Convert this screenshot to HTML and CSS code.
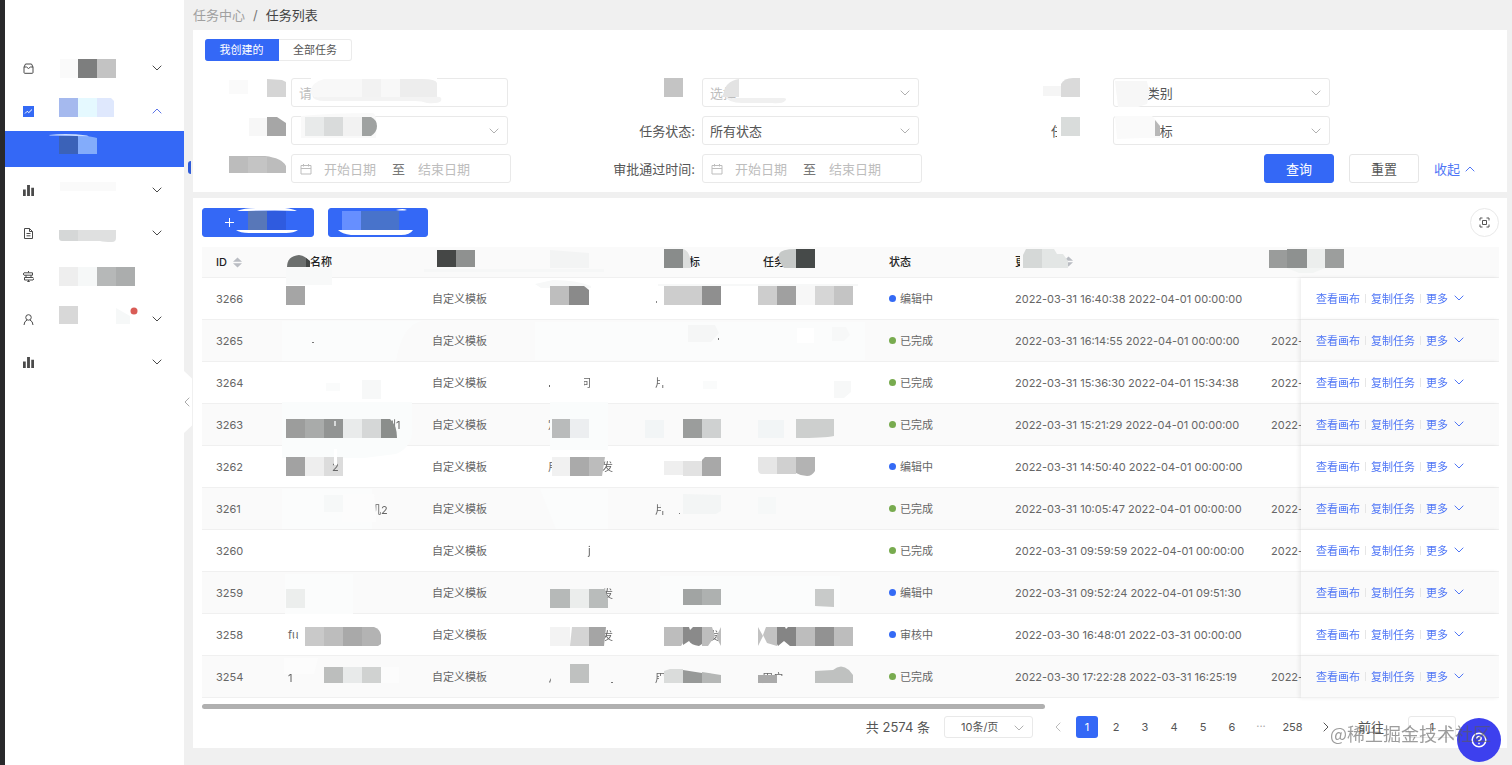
FILE: index.html
```html
<!DOCTYPE html>
<html lang="zh-CN">
<head>
<meta charset="utf-8">
<title>任务列表</title>
<link rel="stylesheet" href="styles.css">
</head>
<body>
<svg class="defs" aria-hidden="true">
  <symbol id="down" viewBox="0 0 10 6"><path d="M.7.7 5 5 9.3.7" fill="none" stroke="currentColor"/></symbol>
  <symbol id="up" viewBox="0 0 10 6"><path d="M.7 5.3 5 1l4.300 4.300" fill="none" stroke="currentColor"/></symbol>
  <symbol id="bars" viewBox="0 0 10 10"><path d="M0 4h2.500v6H0zM3.700 0h2.600v10H3.700zM7.500 2.500H10V10H7.500z" fill="currentColor"/></symbol>
  <symbol id="cal" viewBox="0 0 12 12"><path d="M1 2.500h10v8.500H1zM1 5.500h10M3.500 1v2.500M8.500 1v2.500" fill="none" stroke="currentColor"/></symbol>
  <symbol id="sort" viewBox="0 0 9 11"><path d="M0 4.800 4.500.5 9 4.800zM0 6.200h9L4.500 10.500z" fill="#b9bcc2"/></symbol>
</svg>
<div class="app">
  <nav class="side" aria-label="主导航">
    <ul class="menu">
      <li><button class="item" aria-label="菜单一"><svg class="ico" viewBox="0 0 11 11"><path d="M1 4 2.500 1h6L10 4v5.500q0 .8-.8.8H1.800Q1 10.300 1 9.500zM1 4h2.500q2 3 4 0H10" fill="none" stroke="currentColor"/></svg><svg class="chev"><use href="#down"/></svg></button></li>
      <li><button class="item on" aria-label="菜单二"><svg class="ico" viewBox="0 0 11 11"><path d="M0 0h11v11H0z" fill="#346af5"/><path d="m2 7.500 2.200-2.200 1.600 1.300L9 3.500" fill="none" stroke="#fff"/></svg><svg class="chev"><use href="#up"/></svg></button>
        <a class="sub" href="#" aria-label="当前页"></a></li>
      <li><button class="item" aria-label="菜单三"><svg class="ico"><use href="#bars"/></svg><svg class="chev"><use href="#down"/></svg></button></li>
      <li><button class="item" aria-label="菜单四"><svg class="ico" viewBox="0 0 11 11"><path d="M1.500.5h5l3 3v7h-8zM6.500.5v3h3M3.500 5.500h4M3.500 7.800h4" fill="none" stroke="currentColor"/></svg><svg class="chev"><use href="#down"/></svg></button></li>
      <li><button class="item" aria-label="菜单五"><svg class="ico" viewBox="0 0 11 11"><path d="M5.500 0v1.500M1 1.800h8.500v2.400H1L0 3zM1.500 6.500H10l1 1.200-1 1.300H1.500zM3 4.200v2.300M8 4.200v2.300M5.500 9v2M4 10.800h3" fill="none" stroke="currentColor"/></svg></button></li>
      <li><button class="item" aria-label="菜单六"><svg class="ico" viewBox="0 0 11 11"><path d="M5.500.7a2.700 2.700 0 1 1 0 5.500 2.700 2.700 0 1 1 0-5.500M1 11q.2-3.800 3-5M10 11q-.2-3.800-3-5" fill="none" stroke="currentColor"/></svg><svg class="chev"><use href="#down"/></svg></button></li>
      <li><button class="item" aria-label="菜单七"><svg class="ico"><use href="#bars"/></svg><svg class="chev"><use href="#down"/></svg></button></li>
    </ul>
    <svg class="mask mask-side" viewBox="0 0 184 400" aria-hidden="true">
      <path fill="#fafafa" d="M60 59h18v19H60z"/><path fill="#7d7e7e" d="M78 59h19v19H78z"/><path fill="#c3c3c3" d="M97 59h19v19H97z"/>
      <path fill="#a5b9ee" d="M59 98h19v19H59z"/><path fill="#e5f9ff" d="M78 98h19v19H78z"/><path fill="#dfe8fd" d="M97 98h14l3 3v16H97z"/>
      <path fill="#3b62b8" d="M59 136h19v18H59z"/><path fill="#83acfb" d="M78 136q14 0 19 2v16H78z"/><path fill="#c9dcff" d="M49 135q18-2 38 .5l2 1q-20-1-39-1z"/>
      <path fill="#fafafa" d="M60 182h56v9H60z"/>
      <path fill="#d5d7d7" d="M59 230h19v11H62q-3 0-3-3z"/><path fill="#dfe0e0" d="M78 230h38v8q0 4-4 4-8 0-12-1H78z"/>
      <path fill="#eee" d="M59 267h19v19H59z"/><path fill="#f6f8f8" d="M78 267h19v19H78z"/><path fill="#b6b8b8" d="M97 267h19v19H97z"/><path fill="#abadad" d="M116 267h19v19h-19z"/>
      <path fill="#d8d8d8" d="M59 306h19v18H59z"/><path fill="#f6f8f8" d="M116 308l14 8v8h-14z"/><circle cx="134" cy="311" r="3.500" fill="#d95c56"/>
    </svg>
    <button class="fold" aria-label="收起侧栏"><svg viewBox="0 0 6 10"><path d="M5.300.7 1 5l4.300 4.300" fill="none" stroke="currentColor"/></svg></button>
    <span class="nub"></span>
  </nav>

  <main class="main">
    <nav class="crumbs"><a href="#">任务中心</a><span>/</span><b>任务列表</b></nav>

    <section class="panel filter">
      <div class="tabs"><button class="tab active">我创建的</button><button class="tab">全部任务</button></div>
      <form class="grid">
        <div class="field"><label for="f1"></label><input class="ctl" id="f1" type="text" placeholder="请" aria-label="关键字"></div>
        <div class="field"><label for="f2"></label><span class="ctl-wrap"><select class="ctl ph" id="f2" aria-label="选择"><option>选择</option></select><svg><use href="#down"/></svg></span></div>
        <div class="field"><label for="f3"></label><span class="ctl-wrap"><select class="ctl" id="f3" aria-label="类别"><option>所有类别</option></select><svg><use href="#down"/></svg></span></div>
        <div class="field"><label for="f4"></label><span class="ctl-wrap"><select class="ctl" id="f4" aria-label="模板"><option></option></select><svg><use href="#down"/></svg></span></div>
        <div class="field"><label for="f5">任务状态:</label><span class="ctl-wrap"><select class="ctl" id="f5"><option>所有状态</option></select><svg><use href="#down"/></svg></span></div>
        <div class="field"><label for="f6"></label><span class="ctl-wrap"><select class="ctl" id="f6" aria-label="指标"><option>所有目标</option></select><svg><use href="#down"/></svg></span></div>
        <div class="field"><label for="f7"></label><div class="ctl range"><svg><use href="#cal"/></svg><input id="f7" placeholder="开始日期" aria-label="开始日期"><span>至</span><input placeholder="结束日期" aria-label="结束日期"></div></div>
        <div class="field"><label for="f8">审批通过时间:</label><div class="ctl range"><svg><use href="#cal"/></svg><input id="f8" placeholder="开始日期"><span>至</span><input placeholder="结束日期" aria-label="结束日期"></div></div>
        <div class="actions"><button type="button" class="btn primary">查询</button><button type="button" class="btn">重置</button><a href="#" class="toggle">收起<svg><use href="#up"/></svg></a></div>
      </form>
      <svg class="mask mask-form" viewBox="193 30 1200 160" aria-hidden="true">
        <path fill="#fafafa" d="M229 80h19v14h-19z"/><path fill="#d5d5d5" d="M267 79l15 1 4 2v15h-19z"/>
        <path fill="#fff" d="M311 78h126v3H311z"/><path fill="#f8f8f8" d="M324 79h38v19h-38q-12 0-14-6 2-10 14-13z"/><path fill="#f2f2f2" d="M362 79h19v19h-19z"/><path fill="#f8f8f8" d="M381 79h19v19h-19z"/><path fill="#ededed" d="M400 79h22q14 0 15 4v15h-37z"/><path fill="#f3f3f3" d="M312 95q3 3 8 2h115q8-1 6 4-3 3-14 2-5-2-12-2h-90q-12 0-13-6"/>
        <path fill="#f7f7f7" d="M249 118h18v18h-18z"/><path fill="#a6a6a6" d="M267 117h10l9 6v13h-19z"/>
        <path fill="#f9f9f9" d="M301 116q30-3 72-3 5 2 3 25H301z"/><path fill="#e8eaea" d="M305 117h19v19h-19z"/><path fill="#d9dbdb" d="M324 117h19v19h-19z"/><path fill="#f2f2f2" d="M343 117h19v19h-19z"/><path fill="#9fa2a1" d="M362 117h9q6 3 6 9t-6 10h-9z"/>
        <path fill="#bcbcbc" d="M229 156h36q17 2 21 10v7h-57z"/><path fill="#c4c4c4" d="M248 157h19v16h-19z"/>
        <path fill="#c4c4c4" d="M664 78h19v19h-19z"/><path fill="#fff" d="M739 81h46v15h-46z"/><path fill="#e3e3e3" d="M723 97q1-16 16-18v18z"/><path fill="#f0f0f0" d="M725 96q4 3 10 2h48q5 0 2 3-3 3-13 2h-30q-14 0-17-7"/>
        <path fill="#f5f5f5" d="M1043 86h18v10h-18z"/><path fill="#dadada" d="M1061 97V84q3-6 12-6h7v19z"/>
        <path fill="#f7f7f7" d="M1115 81h32v1l3 10-3 12-9 3h-20z"/>
        <text x="1051" y="136" font-size="13" fill="#555">任</text><path fill="#fff" d="M1057 120h9v20h-9z"/><path fill="#d9dcdb" d="M1061 117h19v19h-19z"/>
        <path fill="#fafafa" d="M1115 116h37l8 9v13h-17l-26 1z"/><path fill="#b8b8b8" d="M1155 120l5 6v10h-5z"/>
      </svg>
    </section>

    <section class="panel list">
      <div class="bar">
        <button class="btn primary add" aria-label="新建"><svg viewBox="0 0 9 9"><path d="M4.500 0v9M0 4.500h9" stroke="currentColor"/></svg></button>
        <button class="btn primary second" aria-label="批量操作"></button>
        <button class="round" aria-label="全屏"><svg viewBox="0 0 11 11"><path d="M1 3.500V1h2.500M7.500 1H10v2.500M10 7.500V10H7.500M3.500 10H1V7.500M3.500 3.500h4v4h-4z" fill="none" stroke="currentColor"/></svg></button>
        <svg class="mask mask-bar" viewBox="202 208 240 30" aria-hidden="true">
          <path fill="#5877b8" d="M248 211h19v19h-19z"/><path fill="#2f5bdf" d="M267 211h19v19h-19z"/><path fill="#fff" d="M237 211q7-3 20-3h28q8 1 12 3-15-1-60 0M236 230h62q-4 3-12 3h-37q-9 0-13-3"/>
          <path fill="#668fff" d="M342 211h19v19h-19z"/><path fill="#4873cb" d="M361 211h38v19h-38z"/><path fill="#fff" d="M338 230h75q-3 5-12 5h-50q-9-1-13-5M396 210q7-2 11 0-5 1-11 0"/>
        </svg>
      </div>

      <div class="table-box">
        <div class="scroller">
        <table>
          <colgroup><col class="c1"><col class="c2"><col class="c3"><col class="c4"><col class="c5"><col class="c6"><col class="c6"><col class="c8"><col><col class="c10"></colgroup>
          <thead><tr><th><span class="sortable">ID<svg><use href="#sort"/></svg></span></th><th>任务名称</th><th></th><th></th><th>任务目标</th><th>任务</th><th>状态</th><th>更</th><th></th><th></th></tr></thead>
          <tbody>
            <tr><td>3266</td><td></td><td>自定义模板</td><td></td><td></td><td></td><td><span class="state">编辑中</span></td><td>2022-03-31 16:40:38 2022-04-01 00:00:00</td><td></td><td><div class="ops"><a href="#">查看画布</a><a href="#">复制任务</a><a href="#">更多<svg><use href="#down"/></svg></a></div></td></tr>
            <tr><td>3265</td><td></td><td>自定义模板</td><td></td><td></td><td></td><td><span class="state done">已完成</span></td><td>2022-03-31 16:14:55 2022-04-01 00:00:00</td><td>2022-</td><td><div class="ops"><a href="#">查看画布</a><a href="#">复制任务</a><a href="#">更多<svg><use href="#down"/></svg></a></div></td></tr>
            <tr><td>3264</td><td></td><td>自定义模板</td><td></td><td></td><td></td><td><span class="state done">已完成</span></td><td>2022-03-31 15:36:30 2022-04-01 15:34:38</td><td>2022-</td><td><div class="ops"><a href="#">查看画布</a><a href="#">复制任务</a><a href="#">更多<svg><use href="#down"/></svg></a></div></td></tr>
            <tr><td>3263</td><td></td><td>自定义模板</td><td>定</td><td></td><td></td><td><span class="state done">已完成</span></td><td>2022-03-31 15:21:29 2022-04-01 00:00:00</td><td>2022-</td><td><div class="ops"><a href="#">查看画布</a><a href="#">复制任务</a><a href="#">更多<svg><use href="#down"/></svg></a></div></td></tr>
            <tr><td>3262</td><td></td><td>自定义模板</td><td>用</td><td></td><td></td><td><span class="state">编辑中</span></td><td>2022-03-31 14:50:40 2022-04-01 00:00:00</td><td></td><td><div class="ops"><a href="#">查看画布</a><a href="#">复制任务</a><a href="#">更多<svg><use href="#down"/></svg></a></div></td></tr>
            <tr><td>3261</td><td></td><td>自定义模板</td><td></td><td></td><td></td><td><span class="state done">已完成</span></td><td>2022-03-31 10:05:47 2022-04-01 00:00:00</td><td>2022-</td><td><div class="ops"><a href="#">查看画布</a><a href="#">复制任务</a><a href="#">更多<svg><use href="#down"/></svg></a></div></td></tr>
            <tr><td>3260</td><td></td><td>自定义模板</td><td></td><td></td><td></td><td><span class="state done">已完成</span></td><td>2022-03-31 09:59:59 2022-04-01 00:00:00</td><td>2022-</td><td><div class="ops"><a href="#">查看画布</a><a href="#">复制任务</a><a href="#">更多<svg><use href="#down"/></svg></a></div></td></tr>
            <tr><td>3259</td><td></td><td>自定义模板</td><td></td><td></td><td></td><td><span class="state">编辑中</span></td><td>2022-03-31 09:52:24 2022-04-01 09:51:30</td><td></td><td><div class="ops"><a href="#">查看画布</a><a href="#">复制任务</a><a href="#">更多<svg><use href="#down"/></svg></a></div></td></tr>
            <tr><td>3258</td><td>fu</td><td>自定义模板</td><td></td><td></td><td></td><td><span class="state">审核中</span></td><td>2022-03-30 16:48:01 2022-03-31 00:00:00</td><td></td><td><div class="ops"><a href="#">查看画布</a><a href="#">复制任务</a><a href="#">更多<svg><use href="#down"/></svg></a></div></td></tr>
            <tr><td>3254</td><td></td><td>自定义模板</td><td></td><td></td><td></td><td><span class="state done">已完成</span></td><td>2022-03-30 17:22:28 2022-03-31 16:25:19</td><td>2022-</td><td><div class="ops"><a href="#">查看画布</a><a href="#">复制任务</a><a href="#">更多<svg><use href="#down"/></svg></a></div></td></tr>
          </tbody>
        </table>
        </div>
        <svg class="mask mask-table" viewBox="202 248 1150 460" aria-hidden="true">
          <!-- header -->
          <path fill="#fafafa" d="M285 252h24v18h-24z"/><path fill="#6c6f6e" d="M287 267q0-11 12-12 7 1 11 7v5z"/><path fill="#444746" d="M306 258l4 3v6h-4z"/><path fill="#f8f9f9" d="M286 268h46v17h-46z"/>
          <path fill="#454746" d="M437 250h19v17h-19z"/><path fill="#8f9190" d="M456 250h19v17h-19z"/><path fill="#f3f4f4" d="M550 250l39 3v15h-39z"/><path fill="#f6f7f7" d="M424 269h180v3H424z"/>
          <path fill="#fafafa" d="M654 252h36v18h-36z"/><path fill="#898c8b" d="M664 249h19v19h-19z"/><path fill="#dcdedd" d="M683 249q8 2 8 19h-8z"/>
          <path fill="#c6c9c8" d="M796 249v19h-12q-7-8-5-14 2-5 17-5"/><path fill="#464a49" d="M796 249h19v19h-19z"/>
          <path fill="#fafafa" d="M1020 252h12v18h-12z"/><use href="#sort" x="1064" y="256" width="9" height="11"/><path fill="#d5d8d7" d="M1023 268v-13l3-6h16v19z"/><path fill="#e3e6e5" d="M1042 249h12l3 5h6l5 7v7h-26z"/>
          <path fill="#9a9c9b" d="M1269 250h18v18h-18z"/><path fill="#8e9190" d="M1287 249h20v19h-20z"/><path fill="#eceeed" d="M1307 249h18v19h-18z"/><path fill="#f3f5f4" d="M1287 268h38l-12 5h-14z"/><path fill="#9c9e9d" d="M1325 249h19v19h-19z"/>
          <!-- 3266 -->
          <path fill="#a5a5a5" d="M286 286h19v19h-19z"/><path fill="#f7f8f8" d="M535 284l18-4q24 0 38 6v2h-50zM658 284h200v2H658z"/><path fill="#bebebe" d="M550 286h19v19h-19z"/><path fill="#8a8a8a" d="M569 286h15l5 4v15h-20z"/>
          <path fill="#cdcdcd" d="M664 286h38v19h-38zM758 286h19v19h-19z"/><path fill="#8f8f8f" d="M702 286h19v19h-19z"/><path fill="#a0a0a0" d="M777 286h19v19h-19z"/><path fill="#f7f7f7" d="M796 286h19v19h-19z"/><path fill="#d6d6d6" d="M815 286h19v19h-19z"/><path fill="#c4c4c4" d="M834 286h19v19h-19z"/><path fill="#888" d="M656 301h1v2h-1z"/>
          <!-- 3265 -->
          <path fill="#fbfcfc" d="M282 321h140q-20 4-26 40H282zM535 322h330v38H535z"/><path fill="#f5f6f6" d="M688 325h27l4 8-8 9h-23z"/><path fill="#f7f8f8" d="M832 327h14l4 8-6 6h-12z"/><path fill="#fff" d="M797 328h17v15h-17z"/><path fill="#777" d="M718 338h1v2h-1zM312 342h2v1h-2z"/>
          <!-- 3264 -->
          <path fill="#f7f8f8" d="M362 380h19v19h-19zM834 381h17v11l-7 6h-10z"/><path fill="#fafbfb" d="M326 383h14v8h-14zM703 381h14v8h-14z"/>
          <text x="580" y="387">问</text><path fill="#fff" d="M577 374h7v16h-7z"/><text x="655" y="387">片</text><path fill="#fff" d="M660 375h8v10h-8z"/><path fill="#666" d="M549 385h1v2h-1z"/>
          <!-- 3263 -->
          <path fill="#fafcfc" d="M282 402h130v24q2 20-16 28l-32 4h-82zM550 402h58v48h-58z"/><text x="385" y="429">刘1</text>
          <path fill="#9c9d9c" d="M286 419h19v19h-19z"/><path fill="#a9abaa" d="M305 419h19v19h-19z"/><path fill="#929493" d="M324 419h19v19h-19z"/><path fill="#e9ebeb" d="M343 419h19v19h-19z"/><path fill="#d5d7d7" d="M362 419h19v19h-19z"/><path fill="#8b8e8c" d="M381 419h9q7 6 7 19h-16z"/><path fill="#d8dada" d="M334 421h2v5h-2z"/>
          <path fill="#b9bbbb" d="M552 419h18v19h-18z"/><path fill="#eceef0" d="M570 419h19v19h-19z"/><path fill="#f2f5f6" d="M645 420h19v18h-19zM758 420h26v18h-26z"/><path fill="#9b9d9c" d="M683 419h19v19h-19z"/><path fill="#cfd1d1" d="M702 419h19v19h-19z"/><path fill="#cdcfce" d="M796 419h38v17q-10 2-38 2z"/>
          <!-- 3262 -->
          <path fill="#a2a2a2" d="M286 457h19v19h-19z"/><path fill="#eee" d="M305 457h19v19h-19z"/><path fill="#dcdcdc" d="M324 457h19v19h-19z"/><text x="332" y="471">2</text><path fill="#fff" d="M334 449h3v16h-3z"/>
          <path fill="#fff" d="M552 458h50v18h-50z"/><text x="602" y="471">发</text><path fill="#f1f1f1" d="M552 457h18v19h-18z"/><path fill="#aaa" d="M570 457h19v19h-19z"/><path fill="#bcbcbc" d="M589 457h16l-3 19h-13z"/>
          <path fill="#efefef" d="M664 461h19v14h-19z"/><path fill="#e2e2e2" d="M683 461h19v15h-19z"/><path fill="#a8a8a8" d="M702 460l3-3h16v19h-19z"/><path fill="#e6e6e6" d="M758 457h19v17h-15q-4 0-4-5z"/><path fill="#d0d0d0" d="M777 457h19v17h-19z"/><path fill="#b3b3b3" d="M796 457h19v14q-3 5-8 5-6 0-11-3z"/>
          <!-- 3261 -->
          <path fill="#fbfcfc" d="M282 489h90v40h-90zM540 489h68v40h-52z"/><text x="370" y="514">机2</text><path fill="#fcfcfc" d="M342 494h32l2 18v10h-34z"/><text x="655" y="514">片</text><path fill="#fafafa" d="M661 503h6v8h-6z"/>
          <path fill="#f3f5f5" d="M683 494l38 1v16l-5 3h-33z"/><path fill="#f6f8f8" d="M324 495h19v17h-19zM758 497h18v17h-18z"/><path fill="#777" d="M679 513h1v1h-1z"/>
          <!-- 3260 -->
          <text x="588" y="555">j</text>
          <!-- 3259 -->
          <path fill="#fbfcfc" d="M285 574h68v40h-68zM660 576h180v36H660z"/><path fill="#eceeed" d="M286 589h19v19h-19z"/><text x="602" y="598">发</text><path fill="#b6b9b8" d="M550 589h20v19h-20z"/><path fill="#ebedec" d="M570 589h19v19h-19z"/><path fill="#b9bcbb" d="M589 589h16l3 10v9h-19z"/>
          <path fill="#a1a4a3" d="M683 589h19v16h-19z"/><path fill="#aeb1b0" d="M702 589h19v16h-19z"/><path fill="#c8cac9" d="M815 589h19v18l-19-1z"/>
          <!-- 3258 -->
          <path fill="#fff" d="M294 638h3v4h-3z"/><path fill="#c9c9c9" d="M305 627h19v19h-19z"/><path fill="#bdbdbd" d="M324 627h19v19h-19z"/><path fill="#a9a9a9" d="M343 627h19v19h-19z"/><path fill="#b3b3b3" d="M362 627h12q6 2 7 8v9l-3 2h-16z"/>
          <text x="602" y="640">发</text><path fill="#f3f3f3" d="M550 627h20v19h-20z"/><path fill="#d4d4d4" d="M572 627h17v19h-19z"/><path fill="#a5a5a5" d="M589 627h17l-2 19h-15z"/>
          <text x="708" y="640">发</text><path fill="#bdbdbd" d="M664 627h19v16l-2 3h-17zM702 627h10l3 9-7 10h-6zM721 627v19l-5-9z"/><path fill="#8a8a8a" d="M683 627h6l1 3 3-3h9v17l-3 2q-8-1-10-5l-6 4z"/>
          <path fill="#c2c2c2" d="M758 627l5 9-5 10zM777 627h-11l-3 8 4 8 10 3z"/><path fill="#858585" d="M777 627h8l1 2 2-2h8v19h-6l-6-5-6 5-1-2z"/><path fill="#bdbdbd" d="M796 627h19v19h-19zM834 627h19v19h-19z"/><path fill="#929292" d="M815 627h19v19h-19z"/>
          <!-- 3254 -->
          <text x="288" y="682">1</text><path fill="#fcfcfc" d="M284 658h34l-4 16h-30zM381 667h18v16h-18z"/><path fill="#bcbebd" d="M324 667h19v16h-19z"/><path fill="#e8eaea" d="M343 667h19v16h-19z"/><path fill="#d0d2d1" d="M362 667h19v16h-19z"/>
          <path fill="#777" d="M549 682l2-4v2l-1 3zM611 682h2v1h-2z"/><path fill="#bfc1c0" d="M570 664h19v19h-19z"/><text x="655" y="682">用</text><path fill="#fafafa" d="M659 676h7v10h-7z"/><path fill="#dadcdb" d="M664 671l6-2h13v14h-19z"/><path fill="#979998" d="M683 670l19 3v10h-19z"/><path fill="#b5b7b6" d="M702 672l19 3v8h-19z"/>
          <text x="762" y="682">用户</text><path fill="#fafafa" d="M777 676h12v9h-12z"/><path fill="#aaa" d="M758 675h19v8h-19z"/><path fill="#bfc1c0" d="M815 671l18-1q8-7 16 0l4 5v8h-38z"/>
        </svg>
        <div class="track"><div class="thumb"></div></div>
      </div>

      <div class="pager">
        <span class="total">共 2574 条</span>
        <span class="ctl-wrap size"><select class="ctl" aria-label="每页条数"><option>10条/页</option></select><svg><use href="#down"/></svg></span>
        <button class="pg arrow off" aria-label="上一页"><svg viewBox="0 0 6 10"><path d="M5.300.7 1 5l4.300 4.300" fill="none" stroke="currentColor"/></svg></button>
        <button class="pg cur">1</button><button class="pg">2</button><button class="pg">3</button><button class="pg">4</button><button class="pg">5</button><button class="pg">6</button><span class="pg more">···</span><button class="pg last">258</button>
        <button class="pg arrow next" aria-label="下一页"><svg viewBox="0 0 6 10"><path d="M.7.7 5 5 .7 9.300" fill="none" stroke="currentColor"/></svg></button>
        <label class="goto" for="goto">前往</label><input class="jump" id="goto" value="1">
      </div>
    </section>
  </main>
</div>
<button class="help" aria-label="帮助"><svg viewBox="0 0 16 16"><circle cx="8" cy="8" r="6.800" fill="none" stroke="#fff" stroke-width="1.500"/><path d="M5.800 6.500Q6 4.500 8 4.500t2.200 1.900Q10.200 8 8 8.600v1M8 10.700v1.500" fill="none" stroke="#fff" stroke-width="1.500"/></svg></button>
<div class="watermark">@稀土掘金技术社区</div>
</body>
</html>
```
FILE: styles.css
```css
* { box-sizing: border-box; }
body { margin: 0; background: #f0f0f0; color: #555; font: 13px/20px Inter, "Noto Sans CJK SC", sans-serif; }
button, input, select { font: inherit; color: inherit; margin: 0; }
button { cursor: pointer; padding: 0; }
a { color: inherit; text-decoration: none; }
.defs { position: absolute; width: 0; height: 0; }
.app { display: flex; min-height: 100vh; }

/* sidebar */
.side { position: relative; flex: none; width: 184px; background: #fff; border-left: 5px solid #29292b; padding-top: 48px; }
.menu { list-style: none; margin: 0; padding: 0; display: flex; flex-direction: column; gap: 3px; }
.item { display: flex; align-items: center; justify-content: space-between; width: 100%; height: 40px; padding: 0 22px 0 18px; border: 0; background: none; color: #4a4a4a; }
.ico { width: 11px; height: 11px; }
.chev { width: 10px; height: 6px; }
.item.on { color: #5b74e8; }
.sub { display: block; height: 36px; background: #3468f6; }
.mask { position: absolute; pointer-events: none; }
.mask-side { left: -5px; top: 0; width: 184px; height: 400px; }
.fold { position: absolute; left: 100%; top: 371px; width: 8px; height: 62px; border: 0; background: #fff; color: #aaa; clip-path: polygon(0 0, 100% 12%, 100% 88%, 0 100%); }
.fold svg { display: block; width: 6px; height: 10px; }
.nub { position: absolute; right: -7px; top: 161px; width: 3px; height: 13px; border-radius: 3px 0 0 3px; background: #2f5bd8; }

/* page */
.main { flex: 1; min-width: 0; padding: 0 5px 16px 9px; }
.crumbs { display: flex; gap: 8px; height: 30px; align-items: center; color: #a0a0a0; }
.crumbs b { font-weight: 400; color: #444; }
.crumbs span { color: #777; }
.panel { position: relative; background: #fff; }

/* filter */
.filter { padding: 9px 32px 9px 12px; }
.tabs { display: flex; margin-bottom: 17px; font-size: 11px; }
.tab { width: 73px; height: 22px; line-height: 20px; border: 1px solid #ebebeb; border-left: 0; border-radius: 0 3px 3px 0; background: #fff; }
.tab.active { width: 74px; background: #3468f6; border-color: #3468f6; color: #fff; border-radius: 3px 0 0 3px; }
.grid { display: grid; grid-template-columns: 11fr 11fr 12fr; row-gap: 9px; }
.field { display: flex; align-items: center; gap: 7px; }
.field label { width: 79px; flex: none; display: flex; justify-content: flex-end; white-space: nowrap; }
.ctl { width: 217px; height: 29px; border: 1px solid #e9e9e9; border-radius: 3px; background: #fff; padding: 0 7px; outline: 0; }
.ctl::placeholder, .range input::placeholder { color: #bdbdbd; opacity: 1; }
.ph { color: #bdbdbd; }
.ctl-wrap { position: relative; display: flex; }
select.ctl { appearance: none; }
.ctl-wrap svg { position: absolute; right: 9px; top: 12px; width: 10px; height: 6px; color: #b0b0b0; }
.range { display: flex; align-items: center; width: 220px; padding: 0 8px; color: #777; }
.range svg { width: 12px; height: 12px; flex: none; color: #bdbdbd; margin-right: 12px; }
.range input { width: 68px; border: 0; padding: 0; background: none; outline: 0; }
.range input:last-child { margin-left: 13px; }
.actions { display: flex; justify-content: flex-end; gap: 15px; align-items: center; }
.btn { width: 70px; height: 29px; border: 1px solid #e6e6e6; border-radius: 3px; background: #fff; }
.btn.primary { background: #3468f6; border-color: #3468f6; color: #fff; }
.toggle { display: flex; align-items: center; gap: 5px; color: #4f76f6; }
.toggle svg { width: 10px; height: 6px; }
.mask-form { left: 0; top: 0; width: 1200px; height: 160px; }

/* list */
.list { margin-top: 6px; padding: 10px 8px 10px 9px; }
.bar { position: relative; display: flex; gap: 14px; margin-bottom: 10px; }
.btn.add { width: 112px; padding-left: 22px; text-align: left; }
.add svg { display: block; width: 9px; height: 9px; }
.btn.second { width: 100px; }
.round { width: 29px; height: 29px; margin-left: auto; border: 1px solid #e9e9e9; border-radius: 50%; background: #fff; display: grid; place-items: center; }
.round svg { width: 11px; height: 11px; }
.mask-bar { left: 0; top: 0; width: 240px; height: 30px; }
.table-box { position: relative; font-size: 11px; }
.scroller { overflow: hidden; padding-bottom: 6px; }
.mask-table { left: 0; top: 1px; width: 1150px; height: 460px; z-index: 3; fill: #666; }
table { width: 1988px; table-layout: fixed; border-collapse: separate; border-spacing: 0; }
.c1 { width: 72px; } .c2 { width: 144px; } .c3 { width: 116px; } .c4 { width: 108px; } .c5 { width: 107px; }
.c6 { width: 126px; } .c8 { width: 256px; } .c10 { width: 198px; }
th, td { padding: 0 0 0 14px; text-align: left; white-space: nowrap; border-bottom: 1px solid #f0f0f0; }
th { height: 31px; background: #fafafa; color: #222; font-weight: 500; }
td { height: 42px; background: #fff; color: #666; }
tr:nth-child(even) td { background: #fafafa; }
td:last-child { position: sticky; right: 0; z-index: 2; padding-left: 15px; box-shadow: -2px 0 4px rgba(0, 0, 0, .07); }
.sortable { display: flex; align-items: center; gap: 6px; }
.sortable svg { width: 9px; height: 11px; }
.state { display: flex; align-items: center; gap: 4px; }
.state::before { content: ""; width: 7px; height: 7px; border-radius: 50%; background: #346af5; }
.state.done::before { background: #78ab4f; }
.ops { display: flex; align-items: center; color: #4f76f6; }
.ops a + a { margin-left: 5px; padding-left: 6px; background: linear-gradient(#e6e6e6, #e6e6e6) 0 50% / 1px 9px no-repeat; }
.ops svg { width: 10px; height: 6px; margin-left: 6px; vertical-align: 2px; }
.track { height: 5px; }
.thumb { width: 65%; height: 5px; border-radius: 3px; background: #b0b0b0; }

/* pagination */
.pager { display: flex; align-items: center; justify-content: flex-end; height: 22px; margin-top: 7px; padding-right: 43px; font-size: 11px; }
.total { font-size: 13px; margin-right: 14px; }
.size .ctl { width: 89px; height: 22px; padding: 0 16px; }
.size svg { top: 9px; }
.size { margin-right: 14px; }
.pg { width: 22px; height: 22px; margin-right: 7px; border: 0; border-radius: 3px; background: none; text-align: center; }
.pg.cur { background: #3468f6; color: #fff; }
.pg.more { color: #aaa; }
.pg.last { width: 27px; margin-right: 9px; }
.pg.arrow { display: grid; place-items: center; }
.arrow svg { width: 6px; height: 10px; }
.off { color: #bbb; }
.pg.next { margin-right: 21px; }
.goto { font-size: 13px; margin-right: 24px; }
.jump { width: 48px; height: 22px; border: 1px solid #e9e9e9; border-radius: 3px; text-align: center; }

/* floating */
.help { position: fixed; right: 11px; bottom: 3px; width: 44px; height: 44px; border: 0; border-radius: 50%; background: #3d40ee; display: grid; place-items: center; }
.help svg { width: 16px; height: 16px; }
.watermark { position: fixed; right: 21px; bottom: 19px; font: 18px/26px "Noto Sans CJK SC", sans-serif; color: rgba(90, 90, 90, .6); pointer-events: none; }
```
